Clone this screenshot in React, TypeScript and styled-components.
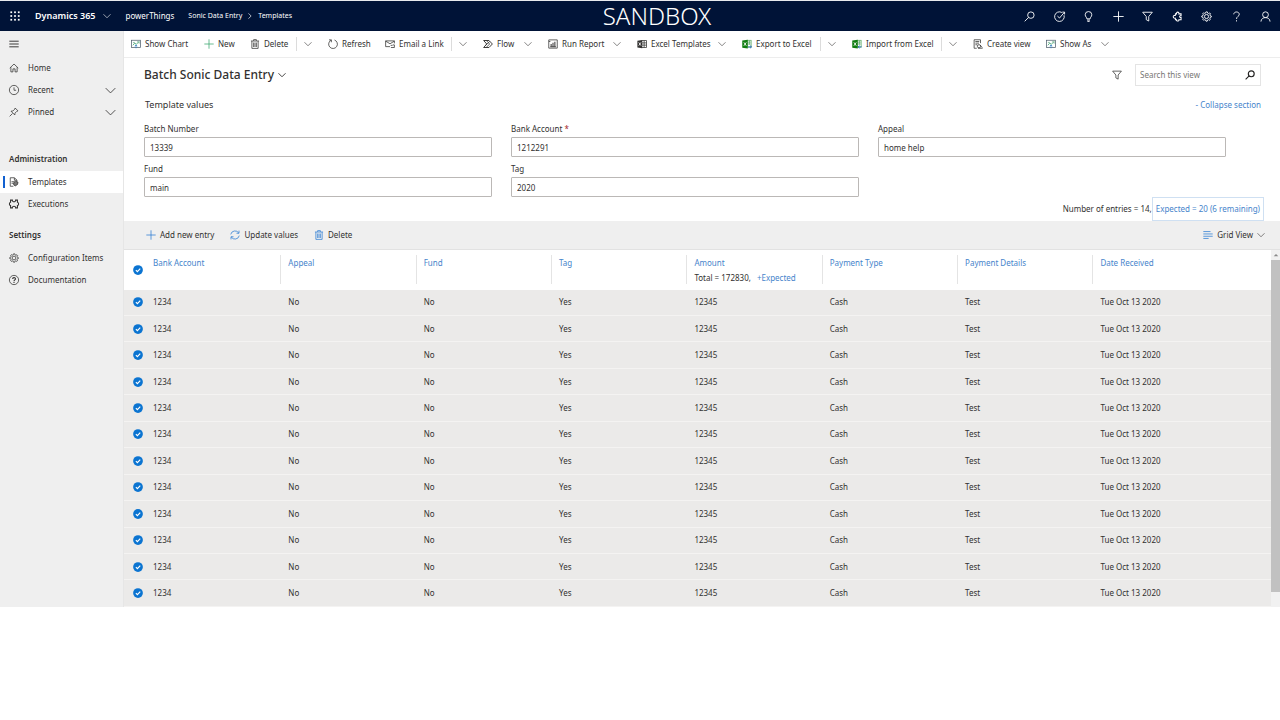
import React from "react";
import styled, { createGlobalStyle, css } from "styled-components";

const GlobalStyle = createGlobalStyle`
  * { box-sizing: border-box; }
  body {
    margin: 0;
    background: #fff;
    color: #323130;
    font-family: "Noto Sans", "Open Sans", sans-serif;
    font-size: 8px;
    line-height: 12px;
  }
  button, input {
    font: inherit;
    color: inherit;
  }
  button {
    padding: 0;
    border: 0;
    background: none;
    white-space: nowrap;
    cursor: pointer;
  }
  a { color: inherit; text-decoration: none; white-space: nowrap; }
`;

/* ---------- icons ---------- */

const Svg = styled.svg<{ $weight: number }>`
  display: block;
  flex: none;
  overflow: visible;
  fill: none;
  stroke: currentColor;
  stroke-width: ${(p) => p.$weight};
`;

type IconProps = { name: IconName; size?: number; color?: string; weight?: number };

const gear =
  "M8 1.2 9.2 1.3 9.7 3.1 11 3.7 12.7 2.8 13.8 4 12.9 5.6 13.3 6.8 15 7.4V8.8L13.3 9.3 12.8 10.6 13.6 12.3 12.4 13.4 10.8 12.6 9.5 13.1 9 14.8H7.3L6.7 13.1 5.4 12.6 3.7 13.4 2.6 12.3 3.4 10.6 2.9 9.3 1.1 8.8V7.3L2.9 6.7 3.4 5.4 2.6 3.8 3.7 2.7 5.4 3.5 6.7 3 7.2 1.3Z";

const chart = (
  <>
    <rect x="0.8" y="2" width="14.4" height="11.6" stroke="#50606e" />
    <path d="M3 10 6 6.5 8.5 8.5 13 4" stroke="#2f9e62" />
    <path d="M3 5.5H6M9.5 4.5H13V7.5" stroke="#6fae8d" />
    <path d="M8 14.8V9.5M6 11.5 8 9.5 10 11.5" stroke="#2f7fc4" />
  </>
);

const excel = (
  <>
    <rect x="8" y="2" width="6.6" height="11" fill="#fff" stroke="#3f9b4a" strokeWidth="1" />
    <path d="M9 5H14M9 8H14M11.8 2.4V9" stroke="#3f9b4a" strokeWidth="1" />
    <path d="M0.4 2.2 9.2 1V15L0.4 13.8Z" fill="#107c10" stroke="none" />
    <path d="M3 5.4 6.8 10.8M6.8 5.4 3 10.8" stroke="#fff" strokeWidth="1.4" />
  </>
);

const icons = {
  waffle: (
    <g fill="currentColor" stroke="none">
      {[0.6, 6.6, 12.6].map((y) =>
        [0.6, 6.6, 12.6].map((x) => <rect key={`${x}-${y}`} x={x} y={y} width="2.8" height="2.8" />)
      )}
    </g>
  ),
  chevron: <path d="M1 4.5 8 11.5 15 4.5" />,
  chevronRight: <path d="M4 1 11 8 4 15" strokeWidth="1.8" />,
  menu: <path d="M0.5 3.5H15.5M0.5 8H15.5M0.5 12.5H15.5" strokeWidth="1.5" />,
  home: <path d="M1.2 8.2 8 1.6 14.8 8.2M3 6.8V14.2H6.3V9.4H9.7V14.2H13V6.8" />,
  clock: (
    <>
      <circle cx="8" cy="8" r="7.4" />
      <path d="M8 3.8V8.4H11.4" />
    </>
  ),
  pin: <path d="M1 15 5.6 10.4M9.8 1.6 14.4 6.2 12.6 6.8 9.6 9.8 9.3 12.8 3.2 6.7 6.2 6.4 9.2 3.4Z" />,
  template: (
    <>
      <path d="M7 14.8H2V1.2H8.8L12.6 5V7" />
      <path d="M8.6 1.4V5.2H12.6" />
      <path d="M4 7.5H9M4 10H7" />
      <path d="M7.4 9.2 10.5 6.8 14.4 8.2 13.6 12 10 14.2 7.6 12.6Z" fill="currentColor" fillOpacity="0.65" />
    </>
  ),
  puzzle: (
    <path
      strokeWidth="1.7"
      d="M2.5 1.8H5.4C5.2 5.2 10.8 5.2 10.6 1.8H13.5V5.2C16 5.6 16 10 13.5 10.4V14.2H10.6C10.8 10.8 5.2 10.8 5.4 14.2H2.5V10.4C0 10 0 5.6 2.5 5.2Z"
    />
  ),
  puzzlePiece: (
    <path
      strokeWidth="1.5"
      d="M5 4.2H6.6C5.8 0.8 10.8 0.8 10 4.2H13.2V6.8C10.4 6.2 10.4 10 13.2 9.4V12.6H10C10.8 15.4 5.8 15.4 6.6 12.6H5L4.8 10.4C0.8 11 0.8 5.8 4.8 6.4Z"
    />
  ),
  gear: (
    <>
      <path d={gear} />
      <circle cx="8" cy="8" r="3" />
    </>
  ),
  help: (
    <>
      <circle cx="8" cy="8" r="7.4" />
      <path d="M5.8 6.4C5.8 3.4 10.3 3.5 10.3 6.2 10.3 7.8 8 7.9 8 9.8M8 11V12.6" strokeWidth="1.7" />
    </>
  ),
  question: <path d="M4 4.8C4.2 0.2 12 0.4 12 4.8 12 8 8 7.8 8 11.6M8 13.4V15.2" strokeWidth="1.3" />,
  search: (
    <>
      <circle cx="10" cy="6" r="4.7" />
      <path d="M6.6 9.4 1 15" />
    </>
  ),
  target: (
    <>
      <path d="M11.5 2.2A7 7 0 1 0 14.6 6.2" />
      <path d="M5 7.4 8 10.2 15 2M12 1.6H15.4V5" />
    </>
  ),
  bulb: <path d="M5.6 11.4C5.6 9 3.2 8.4 3.2 5.4A4.8 4.6 0 0 1 12.8 5.4C12.8 8.4 10.4 9 10.4 11.4ZM5.8 13.2H10.2M6.4 15.2H9.6" />,
  plus: <path d="M8 0.5V15.5M0.5 8H15.5" />,
  filter: <path d="M1 1.8H15L9.8 8V14.6L6.2 12.6V8Z" />,
  person: (
    <>
      <circle cx="8" cy="5.4" r="4.2" />
      <path d="M1.4 15.4C1.6 7.6 14.4 7.6 14.6 15.4" />
    </>
  ),
  chart,
  trash: (
    <path d="M1.5 3.2H14.5M5.8 3V1H10.2V3M3 3.4V15H13V3.4M5.8 5.6V12.8M8 5.6V12.8M10.2 5.6V12.8" />
  ),
  refresh: <path d="M5.2 1.8A7 7 0 1 0 10.4 1.6M1.6 1.4H5.4V5.2" />,
  mail: (
    <>
      <path d="M8 12.2H1V3H15V7M1 3.4 8 7.6 15 3.4" />
      <path d="M9 10.2H12M9.4 13.6H15V9.4H12.4" />
    </>
  ),
  flow: (
    <>
      <path d="M1 2.4H9.6L15 8 9.6 13.6H1L6 8Z" strokeWidth="1.5" />
      <path d="M5.4 2.4 10.6 8 5 13.6M3.4 10.8 10.8 3.8" />
    </>
  ),
  report: (
    <>
      <path d="M3 1.4H14.8V14.6H1.2V1.4H3" />
      <path d="M1.4 4H3.8" />
      <path d="M5 11.8V8M8 11.8V6M11 11.8V4.4M3.6 12.4H12.6" strokeWidth="1.6" />
    </>
  ),
  excelTemplate: (
    <>
      <path d="M7.6 2.4H15.2V13.6H7.6M7.6 6.2H15M7.6 9.8H15M11.4 2.4V13.6" />
      <path d="M0.6 2.6 8.4 1.4V14.6L0.6 13.4Z" fill="currentColor" stroke="none" />
      <path d="M2.8 5.4 6.4 10.6M6.4 5.4 2.8 10.6" stroke="#fff" strokeWidth="1.3" />
    </>
  ),
  excelOut: (
    <>
      {excel}
      <path d="M9.6 12.6H15M13 10.6 15.2 12.6 13 14.6" stroke="#2467b0" strokeWidth="1.4" />
    </>
  ),
  excelIn: (
    <>
      {excel}
      <path d="M10 12.6H15.4M12 10.6 9.8 12.6 12 14.6" stroke="#2467b0" strokeWidth="1.4" />
    </>
  ),
  createView: (
    <>
      <path d="M6 14.8H1.8V1.2H12V6.6M3.8 4H10M3.8 6.6H9.6M3.8 9.2H7" />
      <circle cx="9.6" cy="11.6" r="2.6" />
      <path d="M11.4 9.6 14.8 13.8M8 14.8H15.4" />
    </>
  ),
  sync: <path d="M1.2 7A7 7 0 0 1 14 4.8M14.4 1V5.2H10.4M14.8 9A7 7 0 0 1 2 11.2M1.6 15V10.8H5.6" />,
  lines: <path d="M0.5 2.5H12M0.5 6.3H15.5M0.5 10H15.5M0.5 13.5H9" />,
  check: (
    <>
      <circle cx="8" cy="8" r="7.8" fill="#0b74d1" stroke="none" />
      <path d="M4.6 8.2 7 10.6 11.6 5.8" stroke="#fff" strokeWidth="1.8" />
    </>
  ),
  up: <path d="M2 11 8 5 14 11Z" fill="currentColor" stroke="none" />,
};

type IconName = keyof typeof icons;

const Icon = ({ name, size = 10, color, weight = 1.2 }: IconProps) => (
  <Svg viewBox="0 0 16 16" width={size} height={size} color={color} $weight={weight} aria-hidden="true">
    {icons[name]}
  </Svg>
);

/* ---------- top bar ---------- */

const TopBar = styled.header`
  display: flex;
  align-items: center;
  height: 31px;
  padding: 0 9px 0 10px;
  border-top: 1px solid #e8eaee;
  background: #001337;
  color: #fff;
`;

const Brand = styled.div`
  display: flex;
  flex: none;
  align-items: center;
  width: 280px;
`;

const Waffle = styled.button`
  margin-right: 15px;
`;

const Product = styled.button`
  display: flex;
  align-items: center;
  gap: 8px;
  margin-right: 14px;
  font-size: 9px;
  font-weight: 600;
`;

const AppName = styled.a`
  margin-right: 14px;
`;

const Crumbs = styled.nav`
  display: flex;
  align-items: center;
  gap: 5px;
  font-size: 7px;
`;

const Environment = styled.div`
  flex: 1;
  text-align: center;
  font-size: 24px;
  line-height: 30px;
  font-weight: 300;
`;

const TopActions = styled.div`
  display: flex;
  flex: none;
  justify-content: space-between;
  width: 247px;
`;

/* ---------- side navigation ---------- */

const Shell = styled.div`
  display: flex;
  align-items: stretch;
`;

const Side = styled.nav`
  flex: none;
  width: 124px;
  background: #efefef;
  border-right: 1px solid #e6e6e6;
`;

const MenuButton = styled.button`
  display: flex;
  align-items: center;
  height: 26px;
  padding-left: 9px;
`;

const SideGroup = styled.h2<{ $gap: number }>`
  margin: ${(p) => p.$gap}px 0 0;
  padding-left: 9px;
  font-size: 8px;
  font-weight: 600;
  line-height: 24px;
`;

const SideLink = styled.a<{ $active?: boolean }>`
  display: flex;
  align-items: center;
  height: 22px;
  padding: 0 7px 0 9px;
  gap: 9px;
  ${(p) =>
    p.$active &&
    css`
      padding-left: 3px;
      background: #fff;
      &::before {
        content: "";
        width: 2px;
        height: 12px;
        margin-right: -5px;
        background: #1160d0;
      }
    `}
`;

const SideLabel = styled.span`
  flex: 1;
`;

/* ---------- main area ---------- */

const Main = styled.main`
  flex: 1;
  min-width: 0;
`;

const CommandBar = styled.div`
  display: flex;
  align-items: center;
  height: 27px;
  padding-left: 7px;
  border-bottom: 1px solid #ededed;
`;

const CommandCell = styled.div<{ $width: number }>`
  display: flex;
  align-items: center;
  width: ${(p) => p.$width}px;
`;

const Command = styled.button`
  display: flex;
  align-items: center;
  gap: 4px;
`;

const More = styled.button<{ $split?: boolean }>`
  display: flex;
  align-items: center;
  justify-content: flex-end;
  height: 14px;
  margin-left: auto;
  margin-right: 16px;
  ${(p) =>
    p.$split &&
    css`
      width: 16px;
      border-left: 1px solid #dcdcdc;
    `}
`;

const ViewHeader = styled.div`
  display: flex;
  align-items: center;
  justify-content: space-between;
  height: 33px;
  padding: 0 19px 0 20px;
`;

const ViewTitle = styled.h1`
  margin: 0;
  font-size: 12px;
  font-weight: 500;
  line-height: 16px;
`;

const ViewPicker = styled.button`
  display: flex;
  align-items: center;
  gap: 4px;
`;

const ViewTools = styled.div`
  display: flex;
  align-items: center;
  gap: 13px;
`;

const SearchBox = styled.form`
  display: flex;
  align-items: center;
  width: 126px;
  height: 22px;
  padding: 0 5px 0 4px;
  border: 1px solid #e4e4e4;
`;

const SearchInput = styled.input`
  flex: 1;
  min-width: 0;
  padding: 0;
  border: 0;
  outline: 0;
  background: none;
  &::placeholder { color: #797775; opacity: 1; }
`;

const SectionHeader = styled.div`
  display: flex;
  align-items: center;
  justify-content: space-between;
  height: 28px;
  padding: 0 19px 0 21px;
`;

const SectionTitle = styled.h2`
  margin: 0;
  font-size: 9px;
  font-weight: 400;
`;

const LinkButton = styled.button`
  color: #4684cb;
`;

const Fields = styled.div`
  display: grid;
  grid-template-columns: repeat(3, 1fr);
  gap: 4px 19px;
  padding: 2px 54px 0 20px;
`;

const Field = styled.label`
  display: block;
  line-height: 16px;
`;

const Required = styled.span`
  color: #a4262c;
`;

const TextInput = styled.input`
  display: block;
  width: 100%;
  height: 20px;
  padding: 0 5px;
  border: 1px solid #bbb8b6;
  border-radius: 1px;
  background: #fff;
`;

const Counts = styled.div`
  display: flex;
  align-items: center;
  justify-content: flex-end;
  height: 24px;
  padding-right: 16px;
`;

const Expected = styled.button`
  height: 24px;
  padding: 0 3px;
  border: 1px solid #cfe0f2;
  color: #4684cb;
`;

const Toolbar = styled.div`
  display: flex;
  align-items: center;
  gap: 16px;
  height: 29px;
  padding: 0 15px 0 22px;
  border-bottom: 1px solid #e2e2e2;
  background: #efefef;
`;

const GridPicker = styled(Command)`
  margin-left: auto;
`;

const GridArea = styled.div`
  display: flex;
`;

const Table = styled.table`
  flex: 1;
  height: 357px;
  border-collapse: collapse;
  table-layout: fixed;
`;

const CheckCol = styled.col`
  width: 22px;
`;

const DataCol = styled.col<{ $last?: boolean }>`
  width: ${(p) => (p.$last ? "auto" : "11.8%")};
`;

const HeadRow = styled.tr`
  height: 40px;
`;

const CheckHead = styled.th`
  padding: 0 0 0 9px;
  vertical-align: middle;
`;

const HeadCell = styled.th`
  padding: 5px 0 0;
  text-align: left;
  vertical-align: top;
  font-weight: 400;
  color: #4684cb;
`;

const HeadInner = styled.div<{ $divider: boolean }>`
  height: 29px;
  padding-left: 7px;
  border-right: 1px solid ${(p) => (p.$divider ? "#e4e4e4" : "transparent")};
  line-height: 15px;
  white-space: nowrap;
`;

const Total = styled.div`
  display: flex;
  gap: 6px;
  color: #323130;
`;

const Row = styled.tr`
  background: #ebeae9;
  border-bottom: 1px solid #f4f3f2;
`;

const Cell = styled.td`
  padding: 0 0 0 7px;
`;

const CheckCell = styled.td`
  padding: 0 0 0 9px;
`;

const Tick = styled.button`
  display: block;
`;

const ScrollTrack = styled.div`
  display: flex;
  flex-direction: column;
  align-items: center;
  width: 9px;
  background: #f1f1f1;
  color: #8a8a8a;
`;

const ScrollArrow = styled.div`
  display: flex;
  align-items: center;
  height: 10px;
`;

const ScrollThumb = styled.div`
  width: 100%;
  height: 93%;
  background: #c1c1c1;
`;

/* ---------- data ---------- */

const topIcons: [IconName, string][] = [
  ["search", "Search"],
  ["target", "Assistant"],
  ["bulb", "Insights"],
  ["plus", "Quick create"],
  ["filter", "Advanced find"],
  ["puzzlePiece", "Apps"],
  ["gear", "Settings"],
  ["question", "Help"],
  ["person", "Account"],
];

type CommandItem = {
  icon: IconName;
  label: string;
  width: number;
  more?: "split" | "plain";
  color?: string;
};

const commands: CommandItem[] = [
  { icon: "chart", label: "Show Chart", width: 73 },
  { icon: "plus", label: "New", width: 46, color: "#3aa76d" },
  { icon: "trash", label: "Delete", width: 78, more: "split" },
  { icon: "refresh", label: "Refresh", width: 57 },
  { icon: "mail", label: "Email a Link", width: 98, more: "split" },
  { icon: "flow", label: "Flow", width: 65, more: "plain" },
  { icon: "report", label: "Run Report", width: 89, more: "plain" },
  { icon: "excelTemplate", label: "Excel Templates", width: 105, more: "plain" },
  { icon: "excelOut", label: "Export to Excel", width: 110, more: "split" },
  { icon: "excelIn", label: "Import from Excel", width: 121, more: "split" },
  { icon: "createView", label: "Create view", width: 73 },
  { icon: "chart", label: "Show As", width: 79, more: "plain" },
];

const fields = [
  { label: "Batch Number", value: "13339" },
  { label: "Bank Account", value: "1212291", required: true },
  { label: "Appeal", value: "home help" },
  { label: "Fund", value: "main" },
  { label: "Tag", value: "2020" },
];

const columns = [
  "Bank Account",
  "Appeal",
  "Fund",
  "Tag",
  "Amount",
  "Payment Type",
  "Payment Details",
  "Date Received",
];

const entry = ["1234", "No", "No", "Yes", "12345", "Cash", "Test", "Tue Oct 13 2020"];
const rows = Array.from({ length: 12 }, () => entry);

const NavItem = ({
  icon,
  label,
  expandable,
  active,
}: {
  icon: IconName;
  label: string;
  expandable?: boolean;
  active?: boolean;
}) => (
  <SideLink href="#" $active={active}>
    <Icon name={icon} />
    <SideLabel>{label}</SideLabel>
    {expandable && <Icon name="chevron" size={11} />}
  </SideLink>
);

export default function App() {
  return (
    <>
      <GlobalStyle />
      <TopBar>
        <Brand>
          <Waffle aria-label="App launcher">
            <Icon name="waffle" />
          </Waffle>
          <Product>
            Dynamics 365
            <Icon name="chevron" size={8} />
          </Product>
          <AppName href="#">powerThings</AppName>
          <Crumbs aria-label="Breadcrumb">
            <a href="#">Sonic Data Entry</a>
            <Icon name="chevronRight" size={6} />
            <a href="#">Templates</a>
          </Crumbs>
        </Brand>
        <Environment>SANDBOX</Environment>
        <TopActions>
          {topIcons.map(([icon, label]) => (
            <button key={label} aria-label={label}>
              <Icon name={icon} size={11} weight={1.3} />
            </button>
          ))}
        </TopActions>
      </TopBar>
      <Shell>
        <Side aria-label="Site map">
          <MenuButton aria-label="Toggle menu">
            <Icon name="menu" />
          </MenuButton>
          <NavItem icon="home" label="Home" />
          <NavItem icon="clock" label="Recent" expandable />
          <NavItem icon="pin" label="Pinned" expandable />
          <SideGroup $gap={24}>Administration</SideGroup>
          <NavItem icon="template" label="Templates" active />
          <NavItem icon="puzzle" label="Executions" />
          <SideGroup $gap={8}>Settings</SideGroup>
          <NavItem icon="gear" label="Configuration Items" />
          <NavItem icon="help" label="Documentation" />
        </Side>
        <Main>
          <CommandBar role="toolbar" aria-label="Commands">
            {commands.map((c) => (
              <CommandCell key={c.label} $width={c.width}>
                <Command>
                  <Icon name={c.icon} color={c.color} />
                  {c.label}
                </Command>
                {c.more && (
                  <More $split={c.more === "split"} aria-label={`More ${c.label} options`}>
                    <Icon name="chevron" size={8} />
                  </More>
                )}
              </CommandCell>
            ))}
          </CommandBar>
          <ViewHeader>
            <ViewTitle>
              <ViewPicker>
                Batch Sonic Data Entry
                <Icon name="chevron" size={8} weight={1.8} />
              </ViewPicker>
            </ViewTitle>
            <ViewTools>
              <button aria-label="Filter">
                <Icon name="filter" />
              </button>
              <SearchBox role="search">
                <SearchInput type="text" placeholder="Search this view" aria-label="Search this view" />
                <button type="button" aria-label="Search">
                  <Icon name="search" weight={1.8} color="#201f1e" />
                </button>
              </SearchBox>
            </ViewTools>
          </ViewHeader>
          <SectionHeader>
            <SectionTitle>Template values</SectionTitle>
            <LinkButton>- Collapse section</LinkButton>
          </SectionHeader>
          <Fields>
            {fields.map((f) => (
              <Field key={f.label}>
                {f.label}
                {f.required && <Required> *</Required>}
                <TextInput type="text" defaultValue={f.value} />
              </Field>
            ))}
          </Fields>
          <Counts>
            <span>Number of entries = 14,</span>
            <Expected>Expected = 20 (6 remaining)</Expected>
          </Counts>
          <Toolbar role="toolbar" aria-label="Entries">
            <Command>
              <Icon name="plus" color="#2b7cd3" />
              Add new entry
            </Command>
            <Command>
              <Icon name="sync" color="#2b7cd3" />
              Update values
            </Command>
            <Command>
              <Icon name="trash" color="#2b7cd3" />
              Delete
            </Command>
            <GridPicker>
              <Icon name="lines" color="#2b7cd3" />
              Grid View
              <Icon name="chevron" size={8} />
            </GridPicker>
          </Toolbar>
          <GridArea>
            <Table>
              <colgroup>
                <CheckCol />
                {columns.map((c, i) => (
                  <DataCol key={c} $last={i === columns.length - 1} />
                ))}
              </colgroup>
              <thead>
                <HeadRow>
                  <CheckHead>
                    <Tick aria-label="Select all">
                      <Icon name="check" />
                    </Tick>
                  </CheckHead>
                  {columns.map((c, i) => (
                    <HeadCell key={c} scope="col">
                      <HeadInner $divider={i < columns.length - 1}>
                        {c}
                        {c === "Amount" && (
                          <Total>
                            Total = 172830,
                            <LinkButton>+Expected</LinkButton>
                          </Total>
                        )}
                      </HeadInner>
                    </HeadCell>
                  ))}
                </HeadRow>
              </thead>
              <tbody>
                {rows.map((row, r) => (
                  <Row key={r}>
                    <CheckCell>
                      <Tick aria-label={`Select row ${r + 1}`}>
                        <Icon name="check" />
                      </Tick>
                    </CheckCell>
                    {row.map((value, i) => (
                      <Cell key={columns[i]}>{value}</Cell>
                    ))}
                  </Row>
                ))}
              </tbody>
            </Table>
            <ScrollTrack aria-hidden="true">
              <ScrollArrow>
                <Icon name="up" size={6} />
              </ScrollArrow>
              <ScrollThumb />
            </ScrollTrack>
          </GridArea>
        </Main>
      </Shell>
    </>
  );
}
